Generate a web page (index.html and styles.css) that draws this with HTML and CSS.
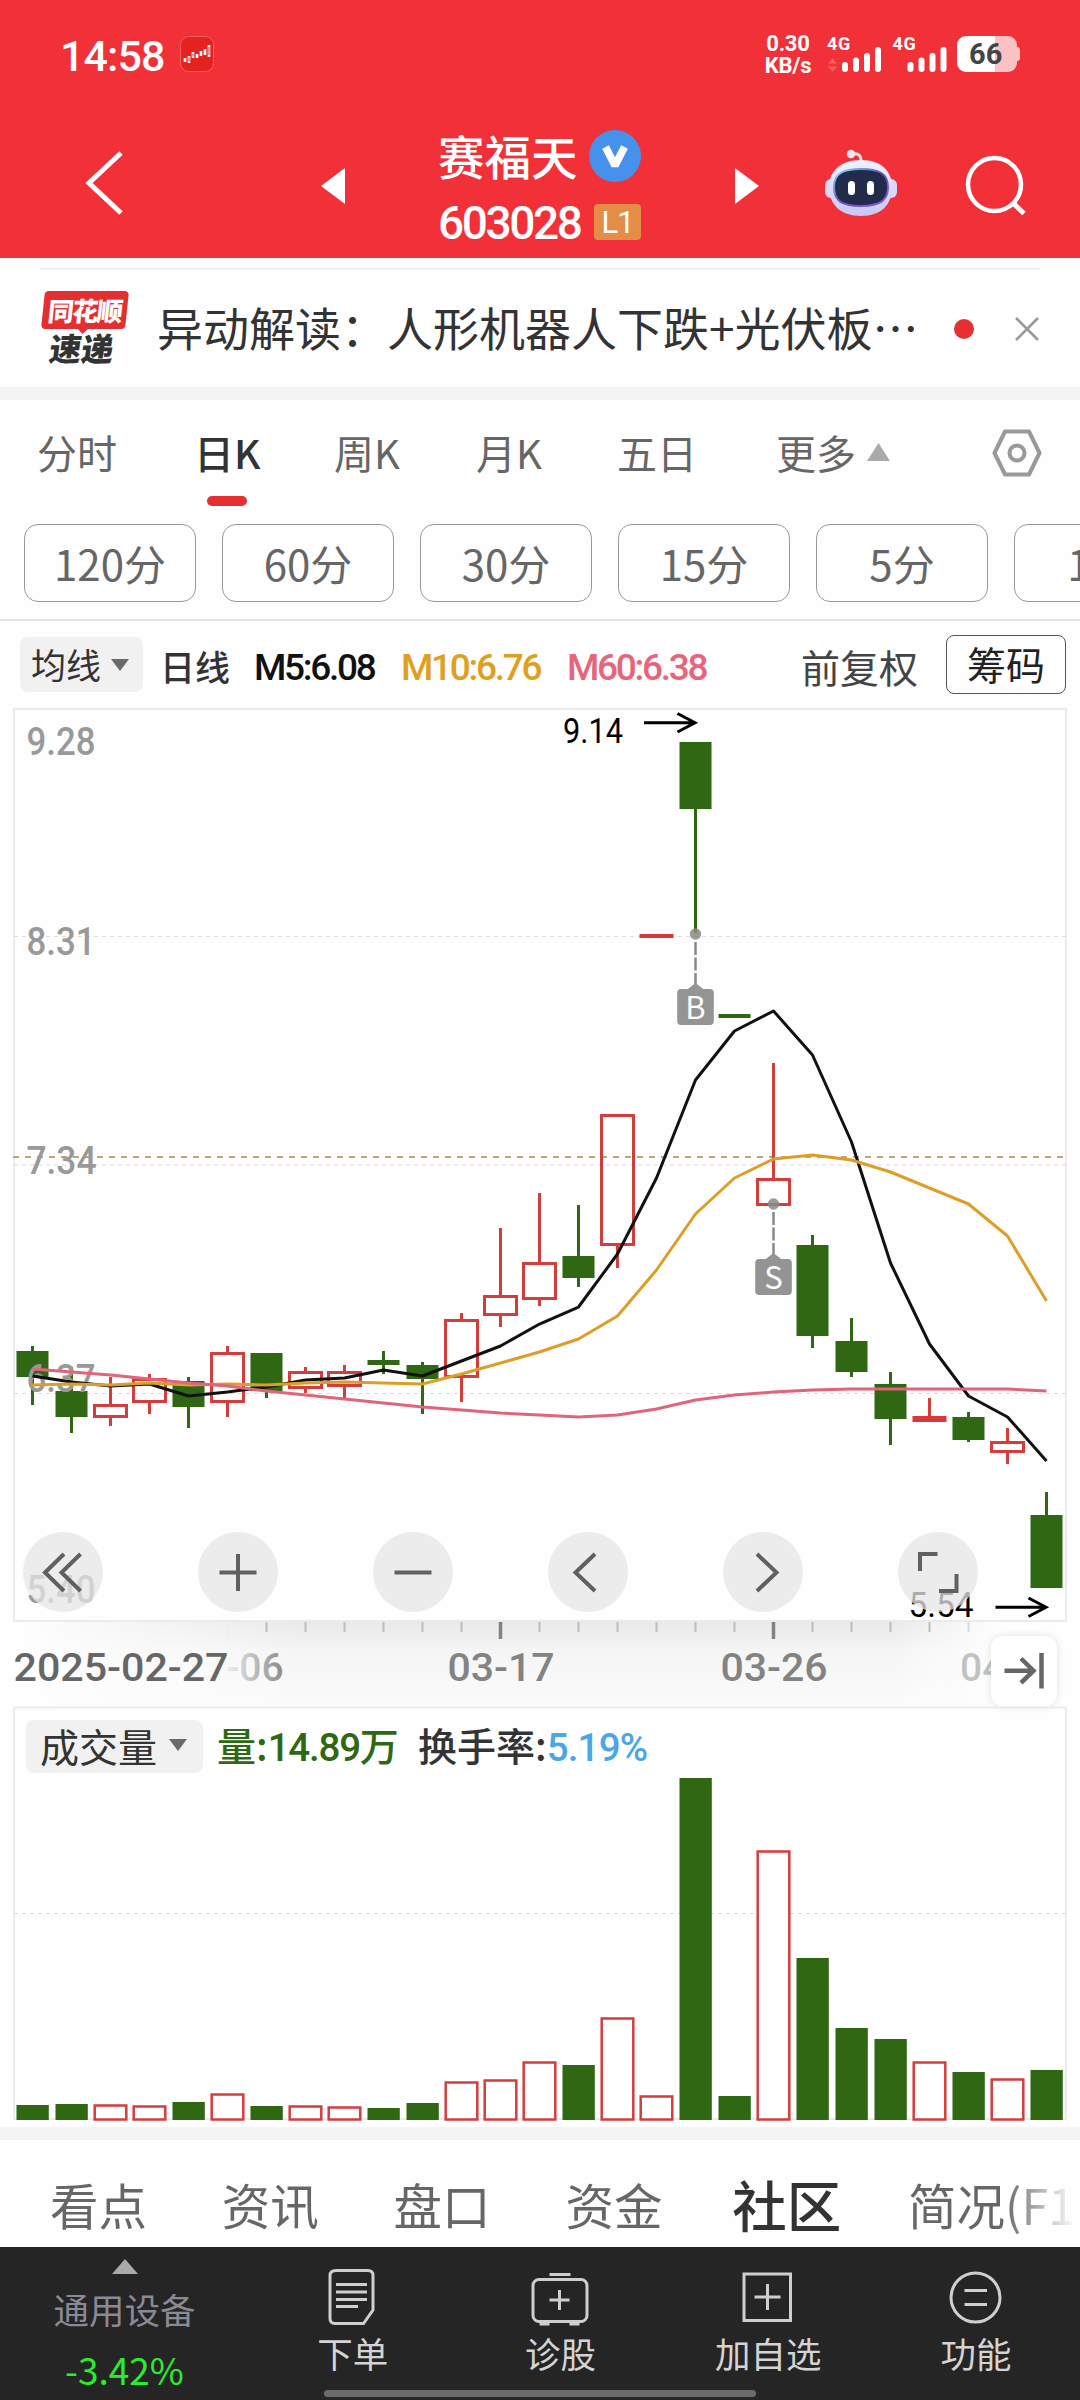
FILE: index.html
```html
<!DOCTYPE html>
<html lang="zh-CN">
<head>
<meta charset="utf-8">
<title>赛福天 603028</title>
<link rel="stylesheet" href="styles.css">
</head>
<body>
<div class="screen">
  <header class="header">
    <div class="status">
      <span class="clock">14:58</span>
      <svg class="app-icon" width="34" height="36" viewBox="0 0 34 36"><rect x=".5" y=".5" width="33" height="35" rx="8" fill="#e42320" stroke="#f5605f"/><path d="M5 22v4M9 20v7M13 16v6M17 18v4M21 15v5M25 13v6M29 9v12" stroke="#fff" stroke-width="2.600"/><path d="M9 21.500v4M13 17.500v3M29 11v8" stroke="#e42320" stroke-width="1"/></svg>
      <span class="speed"><span>0.30</span><span>KB/s</span></span>
      <svg class="signals" width="126" height="40" viewBox="825 34 126 40">
        <path d="M828 63.500l4.500-5 4.500 5zM828 66.500l4.500 5 4.500-5z" fill="#fa6468"/>
        <path d="M845 65v4M856 60.500v8.500M867 56v13M878 50v19M910.500 65v4M921.500 60.500v8.500M932.500 56v13M943.500 50v19" stroke="#fff" stroke-width="6" stroke-linecap="round"/>
        <text x="827" y="49.500" class="gen">4G</text><text x="892.500" y="49.500" class="gen">4G</text>
      </svg>
      <span class="battery"><b>66</b></span>
    </div>
    <div class="titlebar">
      <svg class="ico-back" width="44" height="70" viewBox="84 148 44 70"><path d="M121 153L89 183l32 30" fill="none" stroke="#fff" stroke-width="5"/></svg>
      <svg class="ico-prev" width="24" height="36" viewBox="0 0 24 36"><path d="M0 18L24 0v36z" fill="#fff"/></svg>
      <div class="title">
        <div class="title-row"><span class="name">赛福天</span><svg width="52" height="52" viewBox="0 0 52 52"><circle cx="26" cy="26" r="26" fill="#4691ec"/><path d="M16.500 17l9.500 18.500L35.500 17" fill="none" stroke="#fff" stroke-width="7.500" stroke-linejoin="bevel"/></svg></div>
        <div class="title-row code-row"><span class="code">603028</span><span class="level">L1</span></div>
      </div>
      <svg class="ico-next" width="24" height="36" viewBox="0 0 24 36"><path d="M24 18L0 0v36z" fill="#fff"/></svg>
      <svg class="ico-robot" width="74" height="68" viewBox="824 149 74 68">
        <defs><linearGradient id="shell" x2="0" y2="1"><stop stop-color="#f4f2fb"/><stop offset="1" stop-color="#c9c6f6"/></linearGradient>
        <linearGradient id="rim" x2="1" y2="1"><stop stop-color="#7fe3f5"/><stop offset=".5" stop-color="#5a4fc0"/><stop offset="1" stop-color="#8a5cf0"/></linearGradient></defs>
        <path d="M852 154q10-2 9 9" fill="none" stroke="#f2dfe9" stroke-width="3"/><circle cx="851" cy="154" r="4.300" fill="#eee3ee"/>
        <rect x="825" y="179" width="14" height="19" rx="6" fill="#d9d8fa"/><rect x="883" y="179" width="14" height="19" rx="6" fill="#d9d8fa"/>
        <path d="M861 160c20 0 31 11 31 27 0 17-10 29-31 29s-32-12-32-29c0-16 12-27 32-27z" fill="url(#shell)"/>
        <path d="M861 169c17 0 27 4 27 18 0 13-7 19-27 19s-27-6-27-19c0-14 10-18 27-18z" fill="#232b4b" stroke="url(#rim)" stroke-width="2"/>
        <path d="M851.500 184.500v7M870.500 184.500v7" stroke="#fff" stroke-width="7" stroke-linecap="round"/>
      </svg>
      <svg class="ico-search" width="62" height="62" viewBox="964 155 62 62"><circle cx="994.500" cy="184.500" r="26.500" fill="none" stroke="#fff" stroke-width="4.500"/><path d="M1013 203l11 10.500" stroke="#fff" stroke-width="5"/></svg>
    </div>
  </header>

  <section class="news">
    <div class="news-row">
      <div class="news-logo"><span class="plate">同花顺</span><span class="sub">速递</span></div>
      <span class="headline">异动解读：人形机器人下跌+光伏板…</span>
      <i class="dot"></i>
      <svg class="close" width="24" height="24" viewBox="0 0 24 24"><path d="M1 1l22 22M23 1L1 23" stroke="#999" stroke-width="2.600"/></svg>
    </div>
  </section>

  <nav class="tabs">
    <span class="tab">分时</span><span class="tab active">日K</span><span class="tab">周K</span><span class="tab">月K</span><span class="tab">五日</span>
    <span class="tab more">更多<svg width="23" height="18" viewBox="0 0 23 18"><path d="M11.500 0L23 18H0z" fill="#aaa"/></svg></span>
    <svg class="gear" width="50" height="48" viewBox="0 0 50 48"><path d="M13 2.500h24L47.500 24 37 45.500H13L2.500 24z" fill="none" stroke="#999" stroke-width="4" stroke-linejoin="round"/><circle cx="25" cy="24" r="7.500" fill="none" stroke="#999" stroke-width="4"/></svg>
  </nav>
  <div class="chips"><span>120分</span><span>60分</span><span>30分</span><span>15分</span><span>5分</span><span>1分</span></div>

  <div class="legend">
    <span class="pill">均线<svg width="18" height="12" viewBox="0 0 18 12"><path d="M0 0h18l-9 12z" fill="#6a6a6a"/></svg></span>
    <span class="lg day">日线</span>
    <span class="lg m5">M5:6.08</span><span class="lg m10">M10:6.76</span><span class="lg m60">M60:6.38</span>
    <span class="adj">前复权</span><span class="cost">筹码</span>
  </div>

  <section class="price">
    <svg id="price" width="1080" height="1006" viewBox="0 700 1080 1006"></svg>
    <div class="tools">
      <i><svg viewBox="0 0 80 80"><path d="M41 22L22 40.500 41 59M57.500 22L38.500 40.500 57.500 59"/></svg></i>
      <i><svg viewBox="0 0 80 80"><path d="M21.500 40.500h37M40 22v37"/></svg></i>
      <i><svg viewBox="0 0 80 80"><path d="M21.500 40.500h37"/></svg></i>
      <i><svg viewBox="0 0 80 80"><path d="M47 22L27.500 40.500 47 59"/></svg></i>
      <i><svg viewBox="0 0 80 80"><path d="M34 22L53.500 40.500 34 59"/></svg></i>
      <i><svg viewBox="0 0 80 80"><path d="M39.500 22H22v17M58.500 42v17H41"/></svg></i>
    </div>
    <div class="jump"><svg width="66" height="70" viewBox="991 1636 66 70"><path d="M1004.500 1670.700H1034M1021 1658.500l12.500 12.200-12.500 12.200M1041.500 1653v35.500" fill="none" stroke="#666" stroke-width="4.500"/></svg></div>
  </section>

  <section class="volume">
    <svg id="volume" width="1080" height="421" viewBox="0 1706 1080 421"></svg>
    <div class="vol-legend">
      <span class="pill">成交量<svg width="18" height="12" viewBox="0 0 18 12"><path d="M0 0h18l-9 12z" fill="#6a6a6a"/></svg></span>
      <span class="vol">量:<span class="num">14.89</span>万</span><span class="turn">换手率:<span class="num rate">5.19%</span></span>
    </div>
  </section>

  <nav class="subnav"><span>看点</span><span>资讯</span><span>盘口</span><span>资金</span><span class="on">社区</span><span class="fade">简况(F10)</span></nav>

  <footer class="bottom">
    <div class="sector"><svg width="26" height="15" viewBox="0 0 26 15"><path d="M13 0l13 15H0z" fill="#aaa"/></svg><span class="sec-name">通用设备</span><span class="sec-chg">-3.42%</span></div>
    <div class="act"><svg viewBox="0 0 60 60"><path d="M13 3.500h32q5 0 5 5V43L40.500 56.500H12q-5 0-5-5V8.500q0-5 6-5z"/><path d="M13 17.500h31M13 25h31M13 32.500h31M13 39.500h22"/></svg>下单</div>
    <div class="act"><svg viewBox="0 0 60 60"><rect x="2" y="12.500" width="54" height="42" rx="6"/><path d="M18.500 7.500h21M8.500 57h10M38.500 57h10M28.500 23v20M18.500 33h20"/></svg>诊股</div>
    <div class="act"><svg viewBox="0 0 60 60"><rect x="6" y="7" width="46.500" height="46.500"/><path d="M29.500 17v26M16.500 30h26"/></svg>加自选</div>
    <div class="act"><svg viewBox="0 0 60 60"><circle cx="29.500" cy="30.500" r="24.500"/><path d="M18.500 23.500h22.500M18.500 37.500h22.500"/></svg>功能</div>
    <i class="home"></i>
  </footer>
</div>
<script src="chart.js"></script>
</body>
</html>
```
FILE: styles.css
```css
* { box-sizing: border-box; }
body { margin: 0; background: #fff; font-family: "Noto Sans CJK SC", sans-serif; color: #333; }
svg { display: block; flex: none; }
i { font-style: normal; }
.screen { width: 1080px; height: 2400px; display: flex; flex-direction: column; overflow: hidden; background: #fefefe; }
.screen > * { flex: none; }

.header { height: 258px; background: #f13037; color: #fff; }
.status { height: 108px; display: flex; align-items: center; padding-left: 60px; }
.clock { font: 500 43px Roboto, sans-serif; width: 120px; letter-spacing: -.9px; padding-top: 3px; }
.speed { margin-left: 549px; width: 50px; display: flex; flex-direction: column; align-items: center; font: 700 22px/22px Roboto, sans-serif; letter-spacing: -.2px; padding-top: 1px; }
.signals { margin-left: 12px; }
.gen { font: 700 18px Roboto, sans-serif; letter-spacing: .6px; fill: #fff; }
.battery { margin-left: 6px; width: 60px; height: 36px; border-radius: 9px; background: linear-gradient(90deg, #fff 38px, #fbc1c3 38px); position: relative; display: flex; align-items: center; }
.battery::after { content: ""; position: absolute; right: -3px; top: 11px; width: 3px; height: 14px; border-radius: 0 3px 3px 0; background: #fbc1c3; }
.battery b { font: 700 29px Roboto, sans-serif; color: #444; padding-left: 12px; }
.titlebar { height: 150px; display: flex; align-items: flex-start; }
.ico-back { margin: 40px 0 0 84px; }
.ico-prev { margin: 60px 0 0 193px; }
.title { width: 204px; margin: 21px 0 0 93px; }
.title-row { display: flex; align-items: center; height: 54px; }
.name { font-size: 46.5px; font-weight: 500; line-height: 54px; width: 151px; position: relative; top: -1px; }
.code-row { height: 44px; margin-top: 17px; }
.code { font: 500 46px/44px Roboto, sans-serif; letter-spacing: -2.400px; width: 156px; padding-top: 2px; }
.level { width: 47px; height: 36px; border-radius: 4px; background: #e48d46; font: 400 31px/37px Roboto, sans-serif; text-align: center; letter-spacing: -1px; }
.ico-next { margin: 60px 0 0 93px; }
.ico-robot { margin: 41px 0 0 65px; }
.ico-search { margin: 47px 0 0 66px; }

.news { height: 142px; border-bottom: 13px solid #f4f4f4; padding: 10px 40px 0; }
.news-row { height: 119px; border-top: 2px solid #eee; display: flex; align-items: center; }
.news-logo { width: 90px; height: 74px; margin: -2px 27px 0 0; position: relative; }
.plate { display: block; width: 84px; height: 38px; margin-left: 3px; border-radius: 4px; background: #e42f30; transform: skewX(-6deg); color: #fff; font-size: 26px; line-height: 37px; text-align: center; font-weight: 900; letter-spacing: -1.500px; }
.plate::after { content: ""; position: absolute; left: 36px; top: 37px; border: 6px solid transparent; border-top-color: #e42f30; border-bottom: 0; }
.sub { display: block; font-size: 32px; line-height: 34px; margin: 1px 0 0 10px; font-weight: 900; transform: skewX(-8deg); }
.headline { font-size: 46px; line-height: 60px; white-space: nowrap; width: 797px; margin-top: -5px; }
.dot { width: 20px; height: 20px; border-radius: 50%; background: #e62f30; }
.close { margin-left: 41px; }

.tabs { height: 124px; display: flex; align-items: flex-start; padding: 22px 0 0 37px; font-size: 40px; line-height: 60px; color: #666; }
.tab { width: 142px; }
.tab:nth-child(1) { width: 157px; }
.tab:nth-child(2) { width: 140px; }
.tab:nth-child(4) { width: 141px; }
.tab:nth-child(5) { width: 159px; }
.tab.active { color: #333; font-weight: 500; position: relative; }
.active::after { content: ""; position: absolute; left: 13px; top: 74px; width: 40px; height: 10px; border-radius: 5px; background: #e62f30; }
.more { width: 216px; display: flex; align-items: center; gap: 11px; }
.gear { margin-top: 7px; }
.chips { height: 97px; display: flex; gap: 26px; padding-left: 24px; border-bottom: 2px solid #e5e5e5; overflow: hidden; }
.chips span { flex: 0 0 172px; height: 78px; border: 1.500px solid #999; border-radius: 14px; font-size: 42px; line-height: 75px; text-align: center; color: #666; }

.legend { height: 79px; display: flex; align-items: flex-start; padding: 14px 0 0 20px; white-space: nowrap; }
.pill { display: flex; align-items: center; background: #f1f1f1; border-radius: 8px; }
.legend .pill { width: 123px; height: 55px; margin-top: 2px; padding: 0 0 2px 11px; font-size: 35px; gap: 10px; }
.legend .pill svg { margin-top: 2px; }
.lg { font-size: 35px; line-height: 58px; }
.day { width: 94px; margin: 2px 0 0 17px; font-weight: 500; }
.m5, .m10, .m60 { font: 500 37px/66px Roboto, sans-serif; letter-spacing: -2.300px; }
.m5 { width: 147px; color: #111; }
.m10 { width: 166px; color: #dfa01f; }
.m60 { width: 234px; color: #e8647a; }
.adj { font-size: 39px; line-height: 60px; width: 145px; margin-top: 1px; color: #444; }
.cost { width: 120px; height: 59px; border: 1.500px solid #555; border-radius: 8px; font-size: 39px; line-height: 55px; text-align: center; color: #222; }

.price { position: relative; height: 1006px; }
.tools { position: absolute; left: 22.500px; top: 832px; display: flex; gap: 95px; }
.tools i { width: 80px; height: 80px; border-radius: 50%; background: rgba(230, 230, 230, .75); }
.tools path { fill: none; stroke: #606060; stroke-width: 4; }
.jump { position: absolute; left: 991px; top: 936px; border-radius: 12px; background: #fff; box-shadow: 0 0 8px rgba(0, 0, 0, .12); }
.volume { position: relative; height: 421px; }
.vol-legend { position: absolute; left: 26px; top: 14px; display: flex; align-items: center; white-space: nowrap; font-size: 39px; line-height: 49px; font-weight: 500; }
.vol-legend .pill { width: 177px; height: 53px; padding: 0 0 3px 14px; gap: 12px; font-weight: 400; }
.vol { color: #2f6713; width: 201px; margin: -4px 0 0 14px; }
.turn { margin-top: -4px; }
.num { font: 500 38.500px Roboto, sans-serif; letter-spacing: -1.200px; }
.rate { color: #4aa7e4; letter-spacing: -.8px; }

.up { fill: none; stroke: #d33d3c; stroke-width: 3; }
.down { fill: #2f6713; }
.stem { fill: none; stroke: #2f6713; stroke-width: 3; }
.frame { fill: none; stroke: #ebebeb; stroke-width: 2; }
.grid { stroke: #dcdcdc; stroke-width: 1.200; stroke-dasharray: 4 4; }
.mid { stroke: #bfa57c; stroke-width: 2; stroke-dasharray: 6 6; }
.ma { fill: none; stroke-width: 3; stroke-linejoin: round; }
.axis { font: 500 39px Roboto, sans-serif; fill: #999; }
.date { font: 500 39px Roboto, sans-serif; fill: #838383; }
.date.start { fill: #666; }
.peak { font: 400 35px Roboto, sans-serif; fill: #000; }
.arrow { fill: none; stroke: #000; stroke-width: 3; }
.flag { font: 400 31px "Noto Sans CJK SC", sans-serif; fill: #fff; text-anchor: middle; }

.subnav { height: 120px; border-top: 13px solid #f4f4f4; display: flex; align-items: center; padding: 21px 0 0 50px; white-space: nowrap; overflow: hidden; font-size: 48.500px; line-height: 70px; color: #666; }
.subnav span { width: 172px; }
.subnav .on { width: 173px; font-size: 54.500px; font-weight: 500; color: #333; margin-left: -5px; }
.subnav .fade { width: 172px; margin-left: 3px; background: linear-gradient(90deg, #666 95px, #fff 168px); -webkit-background-clip: text; background-clip: text; color: transparent; }

.bottom { height: 153px; background: #252525; position: relative; display: flex; color: #d4d4d4; font-size: 35.500px; line-height: 48px; }
.sector { width: 249px; display: flex; flex-direction: column; align-items: center; padding-top: 12px; }
.sec-name { color: #8a8a94; margin-top: 11px; }
.sec-chg { color: #29ee2a; font-size: 37px; line-height: 48px; margin-top: 12px; letter-spacing: 0; }
.act { flex: 1; display: flex; flex-direction: column; align-items: center; padding-top: 20px; }
.act svg { width: 60px; height: 60px; margin-bottom: 2px; fill: none; stroke: #cfcfcf; stroke-width: 3; }
.home { position: absolute; left: 324px; top: 143px; width: 432px; height: 7px; border-radius: 4px; background: #6b6b6b; }
```
FILE: chart.js
```js
// Pixel geometry of each session: [up?, high, bodyTop, bodyBottom, low, volumeTop]
const days = [
  [0,1346,1351,1377,1405,2105],[0,1367,1391,1417,1433,2104],[1,1377,1404,1418,1426,2104],[1,1374,1378,1403,1414,2105],
  [0,1377,1381,1407,1428,2102],[1,1346,1352,1403,1417,2093],[0,1353,1353,1391,1398,2106],[1,1367,1371,1389,1393,2105],
  [1,1365,1371,1387,1398,2106],[0,1351,1360,1365,1374,2108],[0,1362,1365,1379,1414,2103],[1,1313,1319,1378,1402,2081],
  [1,1228,1295,1316,1327,2079],[1,1193,1262,1300,1306,2061],[0,1205,1256,1278,1287,2065],[1,1114,1114,1246,1268,2017],
  [1,934,934,938,938,2095],[0,742,742,809,933,1778],[0,1014,1014,1018,1018,2096],[1,1063,1178,1206,1206,1850],
  [0,1235,1245,1336,1348,1958],[0,1318,1341,1372,1377,2028],[0,1372,1384,1419,1445,2039],[1,1398,1416,1422,1422,2061],
  [0,1412,1417,1440,1442,2072],[1,1428,1441,1453,1464,2078],[0,1492,1515,1588,1588,2070]
];
const ma = {
  '#111': [1376,1382,1386,1384,1396,1392,1387,1380,1378,1370,1376,1361,1346,1324,1307,1254,1178,1080,1031,1011,1055,1142,1263,1344,1396,1417,1461],
  '#dc9e26': [1385,1384,1385,1383,1385,1384,1385,1383,1382,1383,1384,1374,1363,1352,1339,1316,1270,1214,1178,1159,1155,1160,1172,1188,1204,1236,1301],
  '#e0647a': [1369,1372,1375,1379,1383,1386,1391,1395,1399,1403,1407,1410,1413,1415,1417,1415,1409,1400,1395,1392,1390,1389,1389,1389,1389,1389,1391]
};
const cx = i => 32.5 + 39 * i;
const line = (x1, y1, x2, y2, cls, extra = '') => `<line x1="${x1}" y1="${y1}" x2="${x2}" y2="${y2}" class="${cls}" ${extra}/>`;
const label = (x, y, s, w, cls) => `<text x="${x}" y="${y}" class="${cls}" textLength="${w}" lengthAdjust="spacingAndGlyphs">${s}</text>`;

let p = '';
p += `<defs>
<linearGradient id="down" x2="0" y2="1"><stop stop-color="#e9e9e9"/><stop offset=".35" stop-color="#f5f5f5"/><stop offset="1" stop-color="#fbfbfb"/></linearGradient>
<linearGradient id="side" gradientUnits="userSpaceOnUse" x1="20" x2="1060" y1="0" y2="0"><stop stop-color="#fff" stop-opacity="0"/><stop offset=".27" stop-color="#fff"/><stop offset=".84" stop-color="#fff"/><stop offset=".94" stop-color="#fff" stop-opacity="0"/></linearGradient>
<mask id="edge"><rect x="0" y="1600" width="1080" height="110" fill="url(#side)"/></mask>
<linearGradient id="veil" gradientUnits="userSpaceOnUse" x1="225" x2="285" y1="0" y2="0"><stop stop-color="#838383" stop-opacity=".08"/><stop offset="1" stop-color="#838383" stop-opacity=".95"/></linearGradient></defs>`;
p += `<rect x="14" y="1622" width="1052" height="84" fill="url(#down)" mask="url(#edge)"/>`;
p += '<path class="frame" d="M14 709H1066V1621H14z"/>';
p += [936.5, 1165, 1393.5].map(y => line(14, y, 1066, y, 'grid')).join('');
p += line(13, 1157, 1066, 1157, 'mid');

days.forEach(([up, hi, top, bot, lo], i) => {
  const x = cx(i);
  if (bot - top < 7) {
    p += `<rect x="${x - 16 - up}" y="${top}" width="${32 + up * 2}" height="${bot - top}" fill="${up ? '#d8383a' : '#2f6713'}"/>`;
  } else if (up) {
    p += `<rect class="up" x="${x - 16}" y="${top + 1.5}" width="32" height="${bot - top - 3}"/>`;
  } else {
    p += `<rect class="down" x="${x - 16}" y="${top}" width="32" height="${bot - top}"/>`;
  }
  const cls = up ? 'up' : 'stem';
  if (hi < top) p += line(x, hi, x, top, cls);
  if (lo > bot) p += line(x, bot, x, lo, cls);
});

[['9.28', 755, 67], ['8.31', 954.5, 67], ['7.34', 1173.5, 68], ['6.37', 1392, 67], ['5.40', 1602.5, 67]]
  .forEach(([s, y, w]) => { p += label(26.5, y, s, w + 2, 'axis'); });
for (const [color, ys] of Object.entries(ma)) {
  p += `<polyline class="ma" stroke="${color}" points="${ys.map((y, i) => cx(i).toFixed(1) + ',' + y).join(' ')}"/>`;
}

// trade markers
[['B', 17, 934, 989], ['S', 19, 1204, 1259]].forEach(([s, i, y, box]) => {
  const x = cx(i);
  p += `<circle cx="${x}" cy="${y}" r="5.7" fill="#888" fill-opacity=".85"/>`;
  p += line(x, y + 8, x, box - 5, '', 'stroke="#888" stroke-width="2.5" stroke-dasharray="13 2.5"');
  p += `<path d="M${x - 9} ${box + 1}l9-7 9 7z" fill="#949494"/><rect x="${x - 18.3}" y="${box}" width="36.6" height="36" rx="4" fill="#949494"/>`;
  p += `<text class="flag" x="${x}" y="${box + 30}">${s}</text>`;
});
p += label(563, 743, '9.14', 60, 'peak') + '<path class="arrow" d="M644 722.700H695M677.500 713.500L695 722.700 677.500 732"/>';
p += label(908.5, 1617, '5.54', 65, 'peak') + '<path class="arrow" d="M995.500 1607.300H1046M1028.500 1598L1046 1607.300 1028.500 1616.500"/>';

// date axis
for (let i = 5; i < 25; i++) {
  const major = i === 12 || i === 19;
  p += line(cx(i), 1622, cx(i), major || i === 5 ? 1639 : 1632, '', `stroke="${i === 5 ? '#eee' : major ? '#838383' : i === 24 ? '#d8d8d8' : '#bdbdbd'}" stroke-width="${major ? 3.5 : 2}"`);
}
p += label(13.5, 1680.5, '2025-02-27', 215, 'date start');
p += '<text class="date" x="226" y="1680.500" style="fill:url(#veil)">-06</text>';
p += label(447.5, 1680.5, '03-17', 107, 'date') + label(720.5, 1680.5, '03-26', 107, 'date');
p += '<text class="date" x="960" y="1680.500" style="fill:#c2c2c2">04</text>';
document.getElementById('price').innerHTML = p;

let v = '<path class="frame" d="M14 1707.500H1066V2119H14z"/>' + line(14, 1913.5, 1066, 1913.5, 'grid');
days.forEach(([up, , , , , top], i) => {
  const x = cx(i);
  v += up ? `<rect class="up" style="stroke-width:2.5;fill:#fff" x="${x - 15.8}" y="${top + 1.5}" width="31.6" height="${2118 - top}"/>`
          : `<rect class="down" x="${x - 16}" y="${top}" width="32.3" height="${2120 - top}"/>`;
});
document.getElementById('volume').innerHTML = v;
```
